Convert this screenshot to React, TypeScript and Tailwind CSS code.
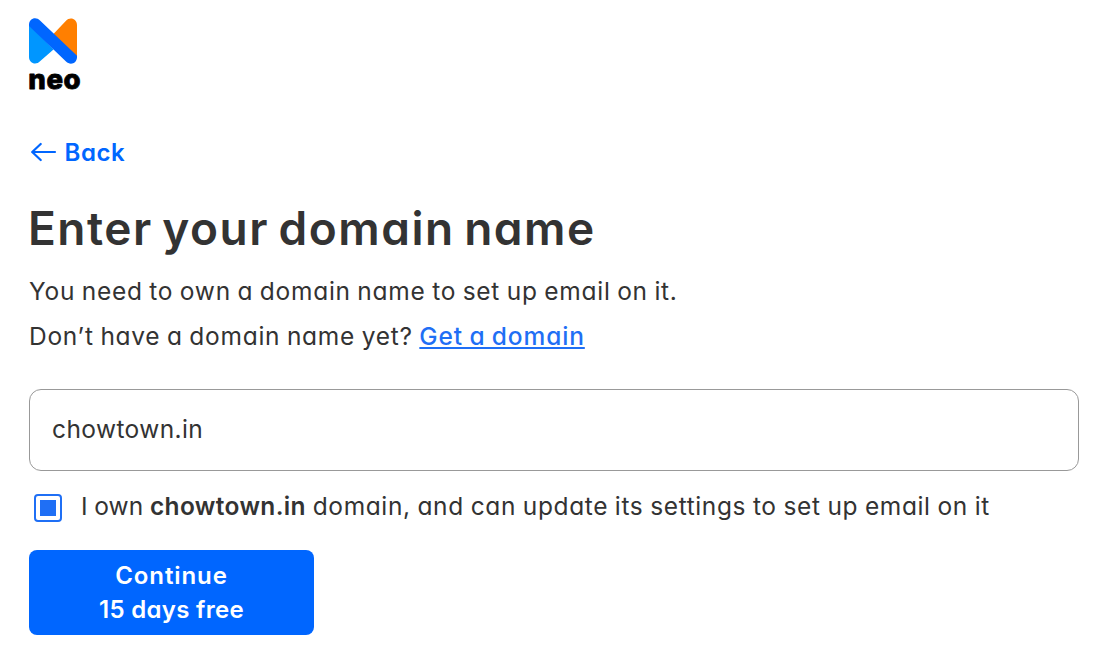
import { useState } from "react";

const NeoLogo = () => (
  <svg width="60" height="80" viewBox="0 0 60 80" aria-label="neo" className="overflow-visible">
    <path d="M0 6 L24.5 31.5 L11 43.3 C7 47.6 0 45.3 0 39 Z" fill="#0096ff" />
    <path d="M23 24 L23 17.5 L37 2.7 C41 -1.6 48 0.7 48 7 V40 Z" fill="#ff7f00" />
    <path
      d="M0 7 C0 0.5 6.7 -1.8 11 2.4 L48 37.8 V39 C48 45.5 41.3 47.8 37 43.6 L0 8 Z"
      fill="#0066ff"
    />
    <text
      x="-0.7"
      y="71.2"
      textLength="53"
      lengthAdjust="spacingAndGlyphs"
      letterSpacing="0.6"
      fontSize="27.5"
      fontWeight="800"
      fill="#000"
      stroke="#000"
      strokeWidth="0.8"
      strokeLinejoin="round"
    >
      neo
    </text>
  </svg>
);

const BackArrow = () => (
  <svg width="26" height="20" viewBox="0 0 26 20" fill="none" aria-hidden="true">
    <path
      d="M24 10 H1.5 M9.7 2 L1.2 10 L9.7 18"
      stroke="#0066ff"
      strokeWidth="2.2"
      strokeLinecap="round"
      strokeLinejoin="round"
    />
  </svg>
);

export default function App() {
  const [domain, setDomain] = useState("chowtown.in");
  const [owned, setOwned] = useState(true);

  return (
    <main className="min-h-[670px] bg-white pt-[18px] pr-5 pl-[29px] font-[Inter,sans-serif] text-[24.5px] text-[#333333] [font-feature-settings:'cv11']">
      <div className="flex h-[116px]">
        <NeoLogo />
      </div>

      <button type="button" className="flex h-9 items-center gap-[7.5px] pl-[2px] font-semibold text-[#0066ff]">
        <BackArrow />
        <span className="pt-[2px] text-2xl tracking-[0.6px]">Back</span>
      </button>

      <h1 className="mt-[26px] text-[46px] leading-[64px] font-semibold tracking-[1.5px] whitespace-nowrap [word-spacing:-3.5px]">
        <span className="-ml-px">Enter your domain name</span>
      </h1>

      <div className="mt-[9px] leading-[45px] whitespace-nowrap">
        <p className="tracking-[0.73px] [word-spacing:-1px]">
          You need to own a domain name to set up email on it.
        </p>
        <p className="tracking-[0.73px] [word-spacing:-1px]">
          Don’t have a domain name yet?{" "}
          <a
            href="#"
            className="font-medium tracking-[0.87px] text-[#1f6ff5] underline decoration-2 underline-offset-2"
          >
            Get a domain
          </a>
        </p>
      </div>

      <input
        type="text"
        value={domain}
        onChange={(e) => setDomain(e.target.value)}
        className="mt-[30px] block h-[82px] w-full rounded-xl border border-[#999999] px-[22px] pb-[2px] tracking-[0.4px] outline-none"
      />

      <label className="mt-[17px] flex h-10 items-center pl-[5px] whitespace-nowrap">
        <input type="checkbox" checked={owned} onChange={() => setOwned(!owned)} className="sr-only" />
        <span className="flex size-7 items-center justify-center rounded-[4px] border-2 border-[#1f6ff5]">
          {owned && <span className="size-4 bg-[#1f6ff5]" />}
        </span>
        <span className="ml-[19px] pb-1 tracking-[0.62px] [word-spacing:-0.7px]">
          <span className="tracking-[0.2px]">I own </span>
          <b className="font-semibold tracking-[0.35px]">{domain}</b> domain, and can update its settings to set
          up email on it
        </span>
      </label>

      <button
        type="button"
        className="mt-[22px] flex h-[85px] w-[285px] flex-col items-center justify-center rounded-lg bg-[#0066ff] text-2xl leading-[34px] font-semibold text-white"
      >
        <span className="tracking-[0.9px]">Continue</span>
        <span className="tracking-[0.3px]">15 days free</span>
      </button>
    </main>
  );
}
